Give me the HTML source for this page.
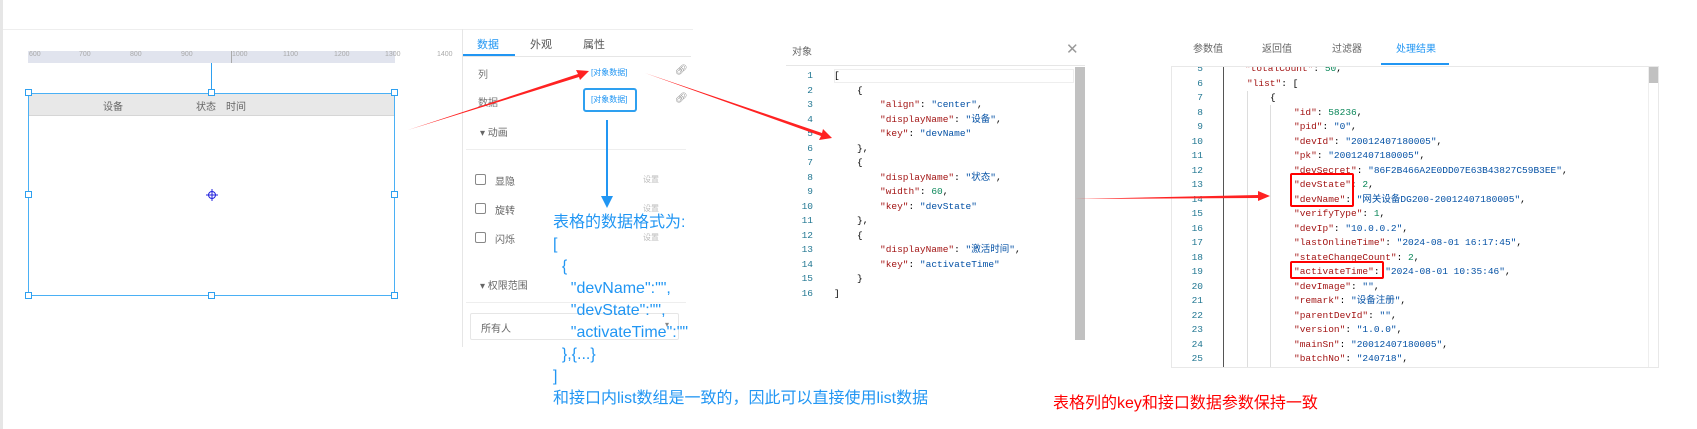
<!DOCTYPE html>
<html><head><meta charset="utf-8"><style>
*{margin:0;padding:0;box-sizing:border-box}
body{width:1697px;height:429px;background:#fff;position:relative;overflow:hidden;font-family:"Liberation Sans","Noto Sans CJK SC",sans-serif}
.a{position:absolute;white-space:nowrap}
.mono{font-family:"Liberation Mono","Noto Sans CJK SC",monospace;font-size:9.5px;line-height:14.5px}
.k{color:#a31515}.s{color:#0451a5}.n{color:#098658}.ln{color:#237893;text-align:right;width:30px}
.h{position:absolute;width:7px;height:7px;border:1px solid #2ea0f0;background:#fff}
.bt{color:#2196f3;font-size:16px;line-height:22px}
.g{color:#999;font-size:10px}
</style></head><body>
<div class="a" style="left:0;top:0;width:3px;height:429px;background:#e6e6e6"></div>
<div class="a" style="left:3px;top:29px;width:690px;height:1px;background:#eee"></div>
<!-- ruler -->
<div class="a" style="left:28px;top:51px;width:367px;height:12px;background:#e1e4ee"></div>
<div class="a" style="left:231px;top:51px;width:1px;height:12px;background:#aaa"></div>
<div class="a g" style="left:29px;top:51px;font-size:7px;color:#aaa;width:420px">
<span style="position:absolute;left:0">600</span><span style="position:absolute;left:50px">700</span><span style="position:absolute;left:101px">800</span><span style="position:absolute;left:152px">900</span><span style="position:absolute;left:203px">1000</span><span style="position:absolute;left:254px">1100</span><span style="position:absolute;left:305px">1200</span><span style="position:absolute;left:356px">1300</span><span style="position:absolute;left:408px">1400</span></div>
<div class="a" style="left:211px;top:63px;width:1px;height:30px;background:#2ea0f0"></div>
<!-- table -->
<div class="a" style="left:28px;top:93px;width:367px;height:203px;border:1px solid #4ab0f5"></div>
<div class="a" style="left:29px;top:94px;width:365px;height:22px;background:#e8e8e8;border-bottom:1px solid #d6d6d6"></div>
<div class="a" style="left:103px;top:98px;font-size:10px;color:#666">设备</div>
<div class="a" style="left:196px;top:98px;font-size:10px;color:#666">状态</div>
<div class="a" style="left:226px;top:98px;font-size:10px;color:#666">时间</div>
<div class="h" style="left:25px;top:89px"></div><div class="h" style="left:208px;top:89px"></div><div class="h" style="left:391px;top:89px"></div>
<div class="h" style="left:25px;top:191px"></div><div class="h" style="left:391px;top:191px"></div>
<div class="h" style="left:25px;top:292px"></div><div class="h" style="left:208px;top:292px"></div><div class="h" style="left:391px;top:292px"></div>
<svg class="a" style="left:205px;top:188px" width="14" height="14"><circle cx="7" cy="7" r="3.5" fill="none" stroke="#2222dd"/><path d="M7 1V13M1 7H13" stroke="#2222dd"/></svg>
<!-- right panel -->
<div class="a" style="left:462px;top:29px;width:1px;height:318px;background:#e6e6e6"></div>
<div class="a" style="left:463px;top:56px;width:228px;height:1px;background:#e6e6e6"></div>
<div class="a" style="left:463px;top:54px;width:52px;height:2px;background:#2196f3"></div>
<div class="a" style="left:477px;top:36px;font-size:11px;color:#2196f3">数据</div>
<div class="a" style="left:530px;top:36px;font-size:11px;color:#555">外观</div>
<div class="a" style="left:583px;top:36px;font-size:11px;color:#555">属性</div>
<div class="a" style="left:478px;top:66px;font-size:10px;color:#777">列</div>
<div class="a" style="left:478px;top:94px;font-size:10px;color:#777">数据</div>
<div class="a" style="left:591px;top:67px;font-size:8px;color:#2196f3">[对象数据]</div>
<div class="a" style="left:583px;top:88px;width:54px;height:24px;border:2px solid #2ea0f0;border-radius:3px"></div>
<div class="a" style="left:591px;top:94px;font-size:8px;color:#2196f3">[对象数据]</div>
<div class="a" style="left:675px;top:65px;font-size:10px;color:#888">🔗︎</div>
<div class="a" style="left:675px;top:93px;font-size:10px;color:#888">🔗︎</div>
<div class="a" style="left:480px;top:124px;font-size:10px;color:#666">▾ 动画</div>
<div class="a" style="left:466px;top:149px;width:220px;height:1px;background:#eee"></div>
<div class="a" style="left:475px;top:174px;width:11px;height:11px;border:1px solid #888;border-radius:2px"></div>
<div class="a" style="left:475px;top:203px;width:11px;height:11px;border:1px solid #888;border-radius:2px"></div>
<div class="a" style="left:475px;top:232px;width:11px;height:11px;border:1px solid #888;border-radius:2px"></div>
<div class="a" style="left:495px;top:173px;font-size:10px;color:#666">显隐</div>
<div class="a" style="left:495px;top:202px;font-size:10px;color:#666">旋转</div>
<div class="a" style="left:495px;top:231px;font-size:10px;color:#666">闪烁</div>
<div class="a" style="left:643px;top:174px;font-size:8px;color:#bbb">设置</div>
<div class="a" style="left:643px;top:203px;font-size:8px;color:#bbb">设置</div>
<div class="a" style="left:643px;top:232px;font-size:8px;color:#bbb">设置</div>
<div class="a" style="left:480px;top:277px;font-size:10px;color:#666">▾ 权限范围</div>
<div class="a" style="left:466px;top:302px;width:220px;height:1px;background:#eee"></div>
<div class="a" style="left:470px;top:313px;width:209px;height:27px;border:1px solid #e6e6e6;border-radius:2px"></div>
<div class="a" style="left:481px;top:320px;font-size:10px;color:#666">所有人</div>
<div class="a" style="left:665px;top:320px;font-size:8px;color:#888">▾</div>
<!-- blue annotation -->
<div class="a" style="left:606px;top:120px;width:2px;height:80px;background:#2196f3"></div>
<div class="a" style="left:601px;top:196px;width:0;height:0;border-left:6px solid transparent;border-right:6px solid transparent;border-top:12px solid #2196f3"></div>
<div class="a bt" style="left:553px;top:212px">表格的数据格式为:<br>[<br>&nbsp;&nbsp;{<br>&nbsp;&nbsp;&nbsp;&nbsp;"devName":"",<br>&nbsp;&nbsp;&nbsp;&nbsp;"devState":"",<br>&nbsp;&nbsp;&nbsp;&nbsp;"activateTime":""<br>&nbsp;&nbsp;},{...}<br>]<br>和接口内list数组是一致的，因此可以直接使用list数据</div>
<!-- middle dialog -->
<div class="a" style="left:792px;top:43px;font-size:10px;color:#666">对象</div>
<div class="a" style="left:1066px;top:40px;font-size:15px;color:#999">✕</div>
<div class="a" style="left:786px;top:65px;width:299px;height:1px;background:#e6e6e6"></div>
<div class="a" style="left:834px;top:69px;width:240px;height:14px;border:1px solid #eee"></div>
<div class="a" style="left:1075px;top:67px;width:10px;height:273px;background:#c1c1c1"></div>
<div class="a mono" style="left:783px;top:69px">
<div class="ln">1<br>2<br>3<br>4<br>5<br>6<br>7<br>8<br>9<br>10<br>11<br>12<br>13<br>14<br>15<br>16</div></div>
<div class="a mono" style="left:834px;top:69px;color:#000"><div>[</div>
<div style="padding-left:23px">{</div>
<div style="padding-left:46px"><span class="k">"align"</span>: <span class="s">"center"</span>,</div>
<div style="padding-left:46px"><span class="k">"displayName"</span>: <span class="s">"设备"</span>,</div>
<div style="padding-left:46px"><span class="k">"key"</span>: <span class="s">"devName"</span></div>
<div style="padding-left:23px">},</div>
<div style="padding-left:23px">{</div>
<div style="padding-left:46px"><span class="k">"displayName"</span>: <span class="s">"状态"</span>,</div>
<div style="padding-left:46px"><span class="k">"width"</span>: <span class="n">60</span>,</div>
<div style="padding-left:46px"><span class="k">"key"</span>: <span class="s">"devState"</span></div>
<div style="padding-left:23px">},</div>
<div style="padding-left:23px">{</div>
<div style="padding-left:46px"><span class="k">"displayName"</span>: <span class="s">"激活时间"</span>,</div>
<div style="padding-left:46px"><span class="k">"key"</span>: <span class="s">"activateTime"</span></div>
<div style="padding-left:23px">}</div>
<div>]</div></div>
<!-- right result panel -->
<div class="a" style="left:1193px;top:40px;font-size:10px;color:#666">参数值</div>
<div class="a" style="left:1262px;top:40px;font-size:10px;color:#666">返回值</div>
<div class="a" style="left:1332px;top:40px;font-size:10px;color:#666">过滤器</div>
<div class="a" style="left:1396px;top:40px;font-size:10px;color:#2196f3">处理结果</div>
<div class="a" style="left:1381px;top:63px;width:68px;height:2px;background:#2196f3"></div>
<div class="a" style="left:1171px;top:66px;width:488px;height:302px;border:1px solid #e8e8e8;overflow:hidden">
<div class="a" style="left:51px;top:0;width:1px;height:302px;background:#555"></div>
<div class="a" style="left:477px;top:0;width:10px;height:16px;background:#c1c1c1"></div>
<div class="a" style="left:476px;top:0;width:1px;height:302px;background:#eee"></div>
<div class="a mono" style="left:1px;top:-5px"><div class="ln" style="width:30px">5<br>6<br>7<br>8<br>9<br>10<br>11<br>12<br>13<br>14<br>15<br>16<br>17<br>18<br>19<br>20<br>21<br>22<br>23<br>24<br>25<br>26</div></div>
<div class="a" style="left:75px;top:24px;width:1px;height:280px;background:#ddd"></div>
<div class="a" style="left:98px;top:38px;width:1px;height:266px;background:#ddd"></div>
<div class="a mono" style="left:75px;top:-5px;color:#000">
<div style="padding-left:-2px;margin-left:-2px"><span class="k">"totalCount"</span>: <span class="n">50</span>,</div>
<div><span class="k">"list"</span>: [</div>
<div style="padding-left:23px">{</div>
<div style="padding-left:47px"><span class="k">"id"</span>: <span class="n">58236</span>,</div>
<div style="padding-left:47px"><span class="k">"pid"</span>: <span class="s">"0"</span>,</div>
<div style="padding-left:47px"><span class="k">"devId"</span>: <span class="s">"20012407180005"</span>,</div>
<div style="padding-left:47px"><span class="k">"pk"</span>: <span class="s">"20012407180005"</span>,</div>
<div style="padding-left:47px"><span class="k">"devSecret"</span>: <span class="s">"86F2B466A2E0DD07E63B43827C59B3EE"</span>,</div>
<div style="padding-left:47px"><span class="k">"devState"</span>: <span class="n">2</span>,</div>
<div style="padding-left:47px"><span class="k">"devName"</span>: <span class="s">"网关设备DG200-20012407180005"</span>,</div>
<div style="padding-left:47px"><span class="k">"verifyType"</span>: <span class="n">1</span>,</div>
<div style="padding-left:47px"><span class="k">"devIp"</span>: <span class="s">"10.0.0.2"</span>,</div>
<div style="padding-left:47px"><span class="k">"lastOnlineTime"</span>: <span class="s">"2024-08-01 16:17:45"</span>,</div>
<div style="padding-left:47px"><span class="k">"stateChangeCount"</span>: <span class="n">2</span>,</div>
<div style="padding-left:47px"><span class="k">"activateTime"</span>: <span class="s">"2024-08-01 10:35:46"</span>,</div>
<div style="padding-left:47px"><span class="k">"devImage"</span>: <span class="s">""</span>,</div>
<div style="padding-left:47px"><span class="k">"remark"</span>: <span class="s">"设备注册"</span>,</div>
<div style="padding-left:47px"><span class="k">"parentDevId"</span>: <span class="s">""</span>,</div>
<div style="padding-left:47px"><span class="k">"version"</span>: <span class="s">"1.0.0"</span>,</div>
<div style="padding-left:47px"><span class="k">"mainSn"</span>: <span class="s">"20012407180005"</span>,</div>
<div style="padding-left:47px"><span class="k">"batchNo"</span>: <span class="s">"240718"</span>,</div>
<div style="padding-left:47px"><span class="k">"productId"</span>: 1,</div>
</div>
</div>
<div class="a" style="left:1290px;top:173px;width:64px;height:34px;border:2px solid #f00;border-radius:2px"></div>
<div class="a" style="left:1290px;top:261px;width:94px;height:18px;border:2px solid #f00;border-radius:2px"></div>
<div class="a" style="left:1053px;top:389px;font-size:16px;color:#f00">表格列的key和接口数据参数保持一致</div>
<!-- red arrows -->
<svg class="a" style="left:0;top:0" width="1697" height="429">
<polygon points="408,130 578,74 576,70 589,71 580,80 579,77" fill="#f22"/>
<polygon points="645,73 822,133 823,129 832,138 819,140 821,136" fill="#f22"/>
<polygon points="1075,199 1258,195 1258,191 1270,196 1258,201 1258,198" fill="#f22"/>
</svg>
</body></html>
